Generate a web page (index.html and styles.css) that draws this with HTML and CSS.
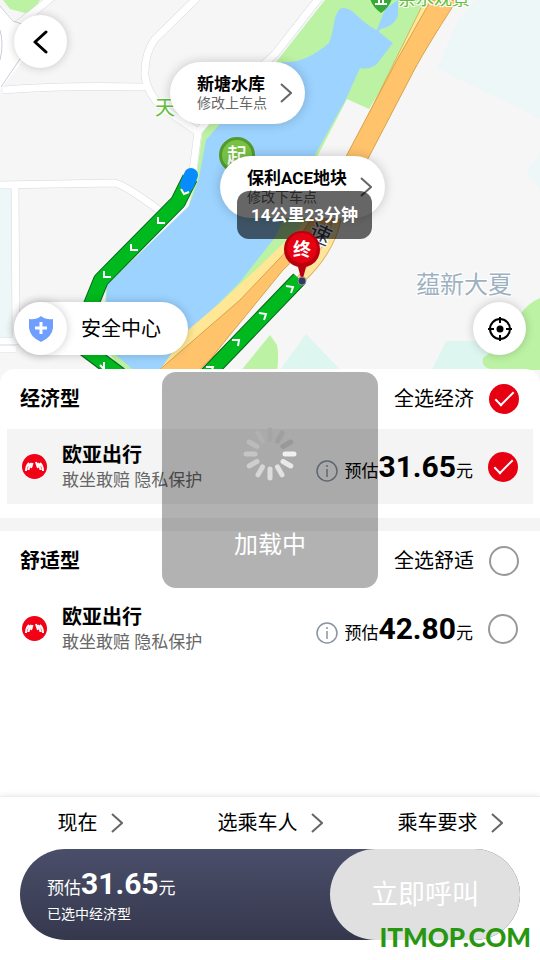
FILE: index.html
```html
<!DOCTYPE html>
<html lang="zh-CN">
<head>
  <meta charset="UTF-8">
  <meta name="viewport" content="width=device-width, initial-scale=1.0">
  <title>欧亚出行</title>
  <link rel="stylesheet" href="styles.css">
</head>
<body>
  <section class="map">
    <svg class="map-canvas" viewBox="0 0 540 384" preserveAspectRatio="xMidYMin slice" aria-hidden="true">
      <rect width="540" height="384" fill="#f6f6f6"/>
      <!-- blocks -->
      <path d="M475 0H540V119L437 68L458 20Z M540 153L526 172L540 190Z" fill="#eef7f7"/>
      <path d="M0 188H13V341H0Z" fill="#eef7f7"/>
      <path d="M270 384L306 334L354 384Z M425 384L446 341H500V384Z" fill="#ddf7f0"/>
      <!-- parks -->
      <path d="M3 0H40Q34 11 25 13L10 9Z" fill="#bcf2a3"/>
      <path d="M325 0H435L369 109L347 99L318 155L310 238L262 275L205 330L190 384H130L104 345L106 285L188 208L196 180L203 128L250 95Z" fill="#bcf2a3"/>
      <path d="M230 384L270 335L277 345Q280 358 275 384Z" fill="#bcf2a3"/>
      <path d="M540 298Q527 303 518 318L500 345L483 358Q480 370 500 370H540Z" fill="#bcf2a3"/>
      <!-- lake -->
      <path d="M338 11Q342 5 352 11Q370 28 377 30L385 9L398 0V15Q395 26 380 29L379 32L393 43L376 65Q368 70 360 68L346 99L315 155L292 200L276 236L240 282L220 302L192 328L165 384H150L104 345L107 285L189 206L199 178L206 140L220 124L282 62Q305 64 329 43Q332 36 335 18Z" fill="#9cd3ff"/>
      <!-- minor roads -->
      <g fill="none" stroke-linejoin="round">
        <g stroke="#d3d8e0" stroke-width="8">
          <path d="M-4 15L9 32V52L-4 88M9 32L55 -5M3 90Q60 85 145 87"/>
          <path d="M197 -2L155 39Q144 54 145 76Q148 98 170 113L198 132L192 178M198 132L225 100L275 54L319 -2"/>
          <path d="M-5 185L114 183Q124 184 160 211M15 184L16 341H-5M16 349H-5M100 366L130 390"/>
        </g>
        <g stroke="#fff" stroke-width="7">
          <path d="M-4 15L9 32V52L-4 88M9 32L55 -5M3 90Q60 85 145 87"/>
          <path d="M197 -2L155 39Q144 54 145 76Q148 98 170 113L198 132L192 178M198 132L225 100L275 54L319 -2"/>
          <path d="M-5 185L114 183Q124 184 160 211M15 184L16 341H-5M16 349H-5M100 366L130 390"/>
        </g>
      </g>
      <path d="M0 6L14 20L22 62L0 90Z" fill="#fff"/>
      <path d="M0 6L13 21L22 24M22 56L1 87M0 30Q4 44 0 60" fill="none" stroke="#c9cfda"/>
      <!-- expressway -->
      <path d="M425 0H442L360 150L318 236L250 302L180 384H150L188 330L220 303L262 264L299 228L348 156Z" fill="#ffe795"/>
      <path d="M425 0L348 156" fill="none" stroke="#d9b55e"/>
      <path d="M431 0H457Q423 52 409 80L337 218L283 270L190 384H143L240 300L298 239L322 203L350 149L397 60Z" fill="#ffc36c" stroke="#d7a34c"/>
      <path d="M337 219Q331 250 302 278L190 384" fill="none" stroke="#dbb562" stroke-width="9"/>
      <path d="M337 219Q331 250 302 278L190 384" fill="none" stroke="#ffe49b" stroke-width="7"/>
      <!-- planned route -->
      <g fill="none" stroke-linejoin="round">
        <path class="route-edge" d="M299 279L198 384M190 178L178 202L101 280L88 312L80 345L120 375"/>
        <path class="route" d="M299 279L198 384M190 178L178 202L101 280L88 312L80 345L120 375"/>
        <path class="route-start" d="M191 175L187 185"/>
        <path stroke="#fff" stroke-width="2" stroke-linejoin="miter" d="M181 189L184 194L189 192M158 217V223H165M131 244V250H138M104 271V277H111M100 365L104 369V362M286 286L293 287L291 293M259 313L266 314L264 320M232 340H239L238 346M206 367H213L211 373"/>
      </g>
    </svg>

    <span class="place place-park">天</span>
    <span class="place place-view">亲水观景</span>
    <span class="place place-tower">蕴新大夏</span>
    <span class="place place-road">速</span>
    <svg class="view-pin" viewBox="0 0 24 28" aria-hidden="true">
      <path d="M1 11Q1 20 12 28Q23 20 23 11V0H1Z" fill="#36a936"/>
      <path d="M6 13H18M6 19H18M10 13V19M14 13V19" stroke="#fff" stroke-width="2"/>
    </svg>
    <span class="start-pin">起</span>

    <button class="back round" aria-label="返回">
      <svg viewBox="0 0 24 24" width="24" height="24"><path d="M17 2L6 12L17 22" fill="none" stroke="#000" stroke-width="3" stroke-linecap="round" stroke-linejoin="round"/></svg>
    </button>

    <button class="stop stop-from">
      <span class="stop-text"><b>新塘水库</b><small>修改上车点</small></span>
      <svg class="chevron" viewBox="0 0 12 20"><path d="M1 1L11 10L1 19"/></svg>
    </button>
    <button class="stop stop-to">
      <span class="stop-text"><b>保利ACE地块</b><small>修改下车点</small></span>
      <svg class="chevron" viewBox="0 0 12 20"><path d="M1 1L11 10L1 19"/></svg>
    </button>
    <div class="trip">14公里23分钟</div>

    <div class="end-pin">
      <svg viewBox="0 0 38 56" aria-hidden="true">
        <path d="M19 52L15 37Q1 33 1 19A18 18 0 0 1 37 19Q37 33 23 37Z" fill="#b9000e"/>
        <circle cx="19" cy="18" r="15" fill="#e50012"/>
        <circle cx="19" cy="51" r="4" fill="#32385a" stroke="#8790aa"/>
      </svg>
      <span>终</span>
    </div>

    <button class="safety">
      <span class="round">
        <svg viewBox="0 0 24 26" width="24" height="26"><path d="M0 3Q7 4 12 0Q17 4 24 3V12Q23 21 12 26Q1 21 0 12Z" fill="#6e9fff"/><path d="M12 6V18M6 12H18" stroke="#fff" stroke-width="3"/></svg>
      </span>
      安全中心
    </button>
    <button class="locate round" aria-label="定位">
      <svg viewBox="0 0 24 24" width="24" height="24"><circle cx="12" cy="12" r="10" fill="none" stroke="#000" stroke-width="2"/><circle cx="12" cy="12" r="3.5"/><path d="M12 0V6M12 18V24M0 12H6M18 12H24" stroke="#000" stroke-width="2"/></svg>
    </button>
  </section>

  <main class="sheet">
    <section class="group">
      <header class="group-head">
        <h2>经济型</h2>
        <label for="all-economy">全选经济</label>
        <input class="tick" type="checkbox" id="all-economy" checked>
      </header>
      <div class="ride selected">
        <svg class="logo" viewBox="0 0 25 25" aria-hidden="true">
          <circle cx="12.5" cy="12.5" r="12.5"/>
          <path d="M4 17Q4 12 7 9M6.500 16Q7 12 9 9M9 14Q10 11 10.500 9M21 17Q21 12 18 9M18.500 16Q18 12 16 9M16 14Q15 11 14 8"/>
        </svg>
        <label class="ride-name" for="economy"><b>欧亚出行</b><small>敢坐敢赔 隐私保护</small></label>
        <svg class="info" viewBox="0 0 44 44"><circle cx="22" cy="22" r="20"/><path d="M22 18V34M22 10V14"/></svg>
        <span class="price">预估<b>31.65</b>元</span>
        <input class="tick" type="checkbox" id="economy" checked>
      </div>
    </section>
    <section class="group">
      <header class="group-head">
        <h2>舒适型</h2>
        <label for="all-comfort">全选舒适</label>
        <input class="tick" type="checkbox" id="all-comfort">
      </header>
      <div class="ride">
        <svg class="logo" viewBox="0 0 25 25" aria-hidden="true">
          <circle cx="12.5" cy="12.5" r="12.5"/>
          <path d="M4 17Q4 12 7 9M6.500 16Q7 12 9 9M9 14Q10 11 10.500 9M21 17Q21 12 18 9M18.500 16Q18 12 16 9M16 14Q15 11 14 8"/>
        </svg>
        <label class="ride-name" for="comfort"><b>欧亚出行</b><small>敢坐敢赔 隐私保护</small></label>
        <svg class="info" viewBox="0 0 44 44"><circle cx="22" cy="22" r="20"/><path d="M22 18V34M22 10V14"/></svg>
        <span class="price">预估<b>42.80</b>元</span>
        <input class="tick" type="checkbox" id="comfort">
      </div>
    </section>
  </main>

  <footer class="order">
    <nav class="options">
      <button>现在<svg class="chevron" viewBox="0 0 12 20"><path d="M1 1L11 10L1 19"/></svg></button>
      <button>选乘车人<svg class="chevron" viewBox="0 0 12 20"><path d="M1 1L11 10L1 19"/></svg></button>
      <button>乘车要求<svg class="chevron" viewBox="0 0 12 20"><path d="M1 1L11 10L1 19"/></svg></button>
    </nav>
    <div class="order-bar">
      <div class="total">
        <span class="price">预估<b>31.65</b>元</span>
        <small>已选中经济型</small>
      </div>
      <button class="call">立即呼叫</button>
    </div>
  </footer>

  <div class="loading" role="status">
    <svg viewBox="-27 -27 54 54" width="54" height="54" aria-hidden="true">
      <g fill="none" stroke-width="5" stroke-linecap="round">
        <path d="M15 0H24" stroke="#f0f0f0"/>
        <path d="M15 0H24" stroke="#e9e9e9" transform="rotate(30)"/>
        <path d="M15 0H24" stroke="#e2e2e2" transform="rotate(60)"/>
        <path d="M15 0H24" stroke="#dcdcdc" transform="rotate(90)"/>
        <path d="M15 0H24" stroke="#d6d6d6" transform="rotate(120)"/>
        <path d="M15 0H24" stroke="#cecece" transform="rotate(150)"/>
        <path d="M15 0H24" stroke="#c5c5c5" transform="rotate(180)"/>
        <path d="M15 0H24" stroke="#bbb" transform="rotate(210)"/>
        <path d="M15 0H24" stroke="#b0b0b0" transform="rotate(240)"/>
        <path d="M15 0H24" stroke="#a5a5a5" transform="rotate(270)"/>
        <path d="M15 0H24" stroke="#9f9f9f" transform="rotate(300)"/>
        <path d="M15 0H24" stroke="#999" transform="rotate(330)"/>
      </g>
    </svg>
    <span>加载中</span>
  </div>
  <div class="watermark">ITMOP.COM</div>
</body>
</html>
```
FILE: styles.css
```css
*,
*::before {
  box-sizing: border-box;
}

body {
  margin: 0;
  min-height: 100vh;
  display: flex;
  flex-direction: column;
  position: relative;
  background: #fff;
  color: #000;
  font-family: Roboto, "Noto Sans CJK SC", sans-serif;
  font-size: 20px;
  line-height: 24px;
}

button {
  border: none;
  padding: 0;
  background: #fff;
  color: inherit;
  font: inherit;
  cursor: pointer;
}

.chevron {
  width: 12px;
  height: 20px;
  flex-shrink: 0;
  fill: none;
  stroke: #666;
  stroke-width: 2;
}

/* Map */
.map {
  position: relative;
  height: 384px;
  overflow: hidden;
}

.map-canvas {
  display: block;
  width: 100%;
  height: 100%;
}

.route-edge {
  stroke: #08651a;
  stroke-width: 16;
}

.route {
  stroke: #00b91f;
  stroke-width: 14;
}

.route-start {
  stroke: #078cff;
  stroke-width: 14;
  stroke-linecap: round;
}

.place {
  position: absolute;
  white-space: nowrap;
  color: #63bf3b;
  text-shadow: 1px 1px #fff, -1px -1px #fff, 1px -1px #fff, -1px 1px #fff;
}

.place-park {
  left: 155px;
  top: 96px;
}

.place-view {
  left: 398px;
  top: -13px;
  font-size: 18px;
}

.place-tower {
  left: 416px;
  top: 273px;
  font-size: 24px;
  color: #9db1c1;
}

.place-road {
  left: 309px;
  top: 223px;
  font-size: 22px;
  color: #333b50;
  transform: rotate(25deg);
}

.view-pin {
  position: absolute;
  left: 369px;
  top: -15px;
  width: 24px;
}

.start-pin {
  position: absolute;
  left: 219px;
  top: 137px;
  width: 36px;
  height: 36px;
  border: 3px solid #529a2c;
  border-radius: 50%;
  background: #77c144;
  color: #fff;
  font-weight: 500;
  line-height: 32px;
  text-align: center;
}

.round {
  display: flex;
  align-items: center;
  justify-content: center;
  width: 53px;
  height: 53px;
  border-radius: 50%;
  background: #fff;
  box-shadow: 0 0 10px rgba(0, 0, 0, 0.2);
}

.back {
  position: absolute;
  left: 14px;
  top: 15px;
}

.locate {
  position: absolute;
  right: 14px;
  top: 302px;
}

.stop {
  position: absolute;
  display: flex;
  align-items: center;
  gap: 13px;
  height: 62px;
  padding: 0 13px 0 27px;
  border-radius: 31px;
  text-align: left;
  box-shadow: 0 0 12px rgba(0, 0, 0, 0.2);
}

.stop-from {
  left: 170px;
  top: 62px;
}

.stop-to {
  left: 220px;
  top: 156px;
}

.stop-text {
  display: flex;
  flex-direction: column;
}

.stop b {
  font-size: 17px;
  line-height: 20px;
}

.stop small {
  font-size: 14px;
  line-height: 18px;
  color: #666;
}

.trip {
  position: absolute;
  left: 237px;
  top: 191px;
  padding: 12px 14px;
  border-radius: 12px;
  background: rgba(0, 0, 0, 0.6);
  color: #fff;
  font-size: 17px;
  font-weight: bold;
}

.end-pin {
  position: absolute;
  left: 283px;
  top: 230px;
  width: 38px;
}

.end-pin svg {
  display: block;
}

.end-pin span {
  position: absolute;
  inset: 8px 0 auto;
  color: #fff;
  font-size: 18px;
  font-weight: bold;
  text-align: center;
}

.safety {
  position: absolute;
  left: 14px;
  top: 302px;
  display: flex;
  align-items: center;
  gap: 14px;
  padding-right: 27px;
  border-radius: 27px;
  box-shadow: 0 0 10px rgba(0, 0, 0, 0.2);
}

/* Ride list */
.sheet {
  position: relative;
  flex: 1;
  margin-top: -15px;
  border-radius: 15px 15px 0 0;
  background: #fff;
}

.group {
  padding: 0 7px 14px;
}

.group + .group {
  border-top: 13px solid #f4f4f4;
}

.group-head {
  display: flex;
  align-items: center;
  height: 60px;
  padding: 0 14px 0 13px;
}

.group-head h2 {
  flex: 1;
  margin: 0;
  font-size: 20px;
}

.tick {
  appearance: none;
  flex-shrink: 0;
  width: 30px;
  height: 30px;
  margin: 0 0 0 15px;
  border: 2px solid #999;
  border-radius: 50%;
}

.tick:checked {
  border: none;
  background: #e60012;
}

.tick:checked::before {
  content: "";
  display: block;
  width: 19px;
  height: 9px;
  margin: 8px 0 0 6px;
  border: solid #fff;
  border-width: 0 0 2px 2px;
  transform: rotate(-45deg);
}

.ride {
  display: flex;
  align-items: center;
  height: 75px;
  padding: 0 15px;
}

.selected {
  background: #f4f4f4;
}

.logo {
  width: 25px;
  height: 25px;
  margin-right: 15px;
  fill: #f20016;
}

.logo path {
  fill: none;
  stroke: #fff;
  stroke-width: 2;
}

.ride-name {
  display: flex;
  flex: 1;
  flex-direction: column;
  padding-top: 2px;
}

.ride-name small {
  font-size: 17px;
  line-height: 26px;
  color: #666;
}

.info {
  width: 22px;
  height: 22px;
  margin: 8px 6px 0 0;
  fill: none;
  stroke: #8a93a3;
  stroke-width: 3;
}

.price {
  font-size: 17px;
  line-height: 34px;
}

.ride .price {
  padding-top: 4px;
}

.price b {
  font-size: 30px;
}

/* Order bar */
.order {
  position: relative;
  padding: 0 20px 20px;
  border-top: 1px solid #eee;
  background: #fff;
  box-shadow: 0 0 6px rgba(0, 0, 0, 0.1);
}

.options {
  display: grid;
  grid-template-columns: repeat(3, 1fr);
  height: 52px;
  margin: 0 -20px;
}

.options button {
  display: flex;
  align-items: center;
  justify-content: center;
  gap: 13px;
}

.order-bar {
  display: flex;
  height: 91px;
  border-radius: 46px;
  background: linear-gradient(#4a4e69, #35384d);
  color: #fff;
}

.total {
  display: flex;
  flex: 1;
  flex-direction: column;
  justify-content: center;
  padding-left: 27px;
}

.total small {
  font-size: 14px;
  line-height: 18px;
}

.call {
  width: 190px;
  border-radius: 46px;
  background: #e0e0e0;
  font-size: 27px;
}

/* Loading toast */
.loading {
  position: absolute;
  left: 50%;
  top: 372px;
  display: flex;
  flex-direction: column;
  align-items: center;
  gap: 48px;
  width: 216px;
  height: 216px;
  margin-left: -108px;
  padding-top: 55px;
  border-radius: 14px;
  background: rgba(0, 0, 0, 0.3);
  color: #fff;
  font-size: 24px;
  line-height: 32px;
}

.watermark {
  position: absolute;
  right: 9px;
  bottom: 8px;
  color: #27970f;
  font-family: Lato, sans-serif;
  font-size: 26px;
  font-weight: 900;
  line-height: 30px;
}
```
